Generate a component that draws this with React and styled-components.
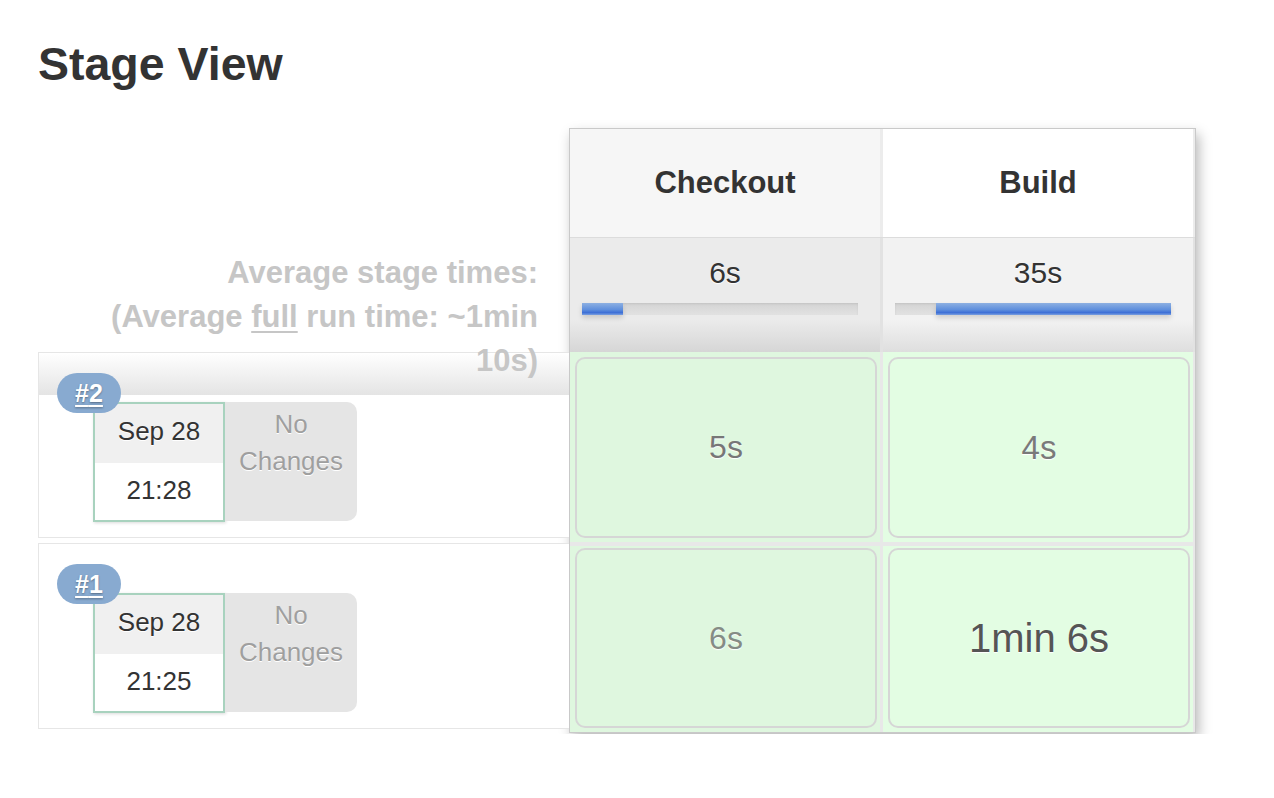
import React from 'react'
import styled, { createGlobalStyle } from 'styled-components'

const stages = ['Checkout', 'Build']

const averages = [
  { label: '6s', offset: 0, width: 15 },
  { label: '35s', offset: 15, width: 85 },
]

const builds = [
  {
    id: 2,
    date: 'Sep 28',
    time: '21:28',
    latest: true,
    cells: [
      { text: '5s', size: 32, color: '#777' },
      { text: '4s', size: 33, color: '#7a7a7a' },
    ],
  },
  {
    id: 1,
    date: 'Sep 28',
    time: '21:25',
    cells: [
      { text: '6s', size: 32, color: '#858c85' },
      { text: '1min 6s', size: 40, color: '#555' },
    ],
  },
]

const App = () => {
  return (
    <>
      <GlobalStyle />
      <Page>
        <Title>Stage View</Title>
        <Layout>
          <Side>
            <HeadSpacer />
            <AvgLabel>
              <div>Average stage times:</div>
              <div>
                (Average <u>full</u> run time: ~1min 10s)
              </div>
            </AvgLabel>
            {builds.map(b => (
              <BuildRow key={b.id} $latest={b.latest}>
                <Badge>
                  <u>#{b.id}</u>
                </Badge>
                <DateBox>
                  <div className="date">{b.date}</div>
                  <div className="time">{b.time}</div>
                </DateBox>
                <ChangesBox>
                  No
                  <br />
                  Changes
                </ChangesBox>
              </BuildRow>
            ))}
          </Side>
          <Table>
            <HeaderRow>
              {stages.map((s, i) => (
                <HeaderCell key={s} $alt={i % 2 === 1}>
                  {s}
                </HeaderCell>
              ))}
            </HeaderRow>
            <AvgRow>
              {averages.map((a, i) => (
                <AvgCell key={i} $alt={i % 2 === 1}>
                  <span className="value">{a.label}</span>
                  <Track>
                    <Fill $offset={a.offset} $width={a.width} />
                  </Track>
                </AvgCell>
              ))}
            </AvgRow>
            <Body>
              {builds.map(b =>
                b.cells.map((c, i) => (
                  <StageCell
                    key={`${b.id}-${i}`}
                    $alt={i % 2 === 1}
                    $first={b.latest}
                  >
                    <Duration $size={c.size} $color={c.color}>
                      {c.text}
                    </Duration>
                  </StageCell>
                ))
              )}
            </Body>
          </Table>
        </Layout>
      </Page>
    </>
  )
}

export default App

const GlobalStyle = createGlobalStyle`
 body {
   margin: 0;
   background: #fff;
   font-family: "Liberation Sans", Helvetica, Arial, sans-serif;
   color: #333;
 }
`
const Page = styled.div`
 padding: 38px 0 0 38px;
`
const Title = styled.h1`
 margin: 0;
 font-size: 46.5px;
 line-height: 52px;
 font-weight: 700;
 color: #333;
`
const Layout = styled.div`
 margin-top: 38px;
 display: flex;
 align-items: flex-start;
`
const Side = styled.div`
 width: 531px;
 display: flex;
 flex-direction: column;
`
const HeadSpacer = styled.div`
 height: 110px;
`
const AvgLabel = styled.div`
 position: relative;
 z-index: 2;
 height: 114px;
 box-sizing: border-box;
 padding: 13px 31px 0 0;
 width: 500px;
 margin-left: auto;
 text-align: right;
 font-size: 31px;
 line-height: 44px;
 font-weight: 700;
 color: #c6c6c6;
 u {
   text-decoration-thickness: 2px;
   text-underline-offset: 4px;
 }
`
const BuildRow = styled.div`
 position: relative;
 height: 186px;
 box-sizing: border-box;
 margin-bottom: 5px;
 border: 1px solid #e6e6e6;
 border-right: none;
 padding: 49px 0 0 54px;
 display: flex;
 align-items: flex-start;
 background: ${p =>
   p.$latest
     ? 'linear-gradient(to bottom, #fff 0, #e4e4e4 42px, #fff 42px)'
     : '#fff'};
`
const Badge = styled.div`
 position: absolute;
 z-index: 2;
 left: 18px;
 top: 20px;
 width: 64px;
 height: 40px;
 border-radius: 20px;
 background: #88aad0;
 color: #fff;
 font-size: 25px;
 font-weight: 700;
 display: flex;
 align-items: center;
 justify-content: center;
 text-shadow: 0 1px 2px rgba(0, 0, 0, 0.35);
 u {
   text-decoration-thickness: 2px;
   text-underline-offset: 3px;
 }
`
const DateBox = styled.div`
 width: 132px;
 height: 120px;
 box-sizing: border-box;
 border: 2px solid #a8d2be;
 background: #fff;
 box-shadow: 1px 1px 3px rgba(0, 0, 0, 0.15);
 display: flex;
 flex-direction: column;
 font-size: 26px;
 color: #333;
 .date,
 .time {
   flex: 1;
   display: flex;
   align-items: center;
   justify-content: center;
   text-shadow: 0 1px 0 #fff;
 }
 .date {
   background: #f0f0f0;
   padding-bottom: 3px;
 }
 .time {
   padding-bottom: 2px;
 }
`
const ChangesBox = styled.div`
 width: 132px;
 height: 119px;
 box-sizing: border-box;
 background: #e5e5e5;
 border-radius: 0 10px 10px 0;
 padding-top: 4px;
 text-align: center;
 font-size: 26px;
 line-height: 37px;
 color: #9f9f9f;
 text-shadow: 0 1px 0 #fff;
`
const Table = styled.div`
 width: 625px;
 border: 1px solid #c9c9c9;
 background: #e8e8e8;
 box-shadow: 3px 6px 12px rgba(0, 0, 0, 0.28);
 flex-shrink: 0;
`
const HeaderRow = styled.div`
 display: grid;
 grid-template-columns: 310px 310px;
 column-gap: 3px;
 background: #ececec;
 border-bottom: 1px solid #dcdcdc;
`
const HeaderCell = styled.div`
 height: 108px;
 display: flex;
 align-items: center;
 justify-content: center;
 background: ${p => (p.$alt ? '#fff' : '#f6f6f6')};
 font-size: 31px;
 font-weight: 700;
 color: #333;
`
const AvgRow = styled.div`
 display: grid;
 grid-template-columns: 310px 310px;
 column-gap: 3px;
 background: #e2e2e2;
`
const AvgCell = styled.div`
 height: 114px;
 box-sizing: border-box;
 padding: 17px 0 0 12px;
 background: ${p =>
   p.$alt
     ? 'linear-gradient(to bottom, #f2f2f2 0, #f2f2f2 72%, #dedede 100%)'
     : 'linear-gradient(to bottom, #ebebeb 0, #ebebeb 72%, #d6d6d6 100%)'};
 .value {
   display: block;
   width: 286px;
   text-align: center;
   font-size: 30px;
   line-height: 36px;
   color: #333;
   text-shadow: 0 1px 1px #fff;
 }
`
const Track = styled.div`
 margin-top: 12px;
 width: 276px;
 height: 12px;
 background: linear-gradient(to bottom, #d3d3d3, #e2e2e2);
 box-shadow: inset 0 1px 2px rgba(0, 0, 0, 0.08);
`
const Fill = styled.div`
 margin-left: ${p => p.$offset}%;
 width: ${p => p.$width}%;
 height: 12px;
 background: linear-gradient(to bottom, #8db0e2 0, #5f8fdd 55%, #3d6fd6 80%, #7aa0e0 100%);
 box-shadow: 0 3px 5px rgba(0, 0, 0, 0.15);
`
const Body = styled.div`
 display: grid;
 grid-template-columns: 310px 310px;
 grid-template-rows: 190px 186px;
 column-gap: 3px;
 row-gap: 4px;
 background: #e8e8e8;
`
const StageCell = styled.div`
 padding: ${p => (p.$first ? '5px 3px 4px 5px' : '2px 3px 4px 5px')};
 background: ${p => (p.$alt ? '#e3fde3' : '#dff7df')};
 display: flex;
`
const Duration = styled.div`
 flex: 1;
 border: 2px solid #d6d6d6;
 border-radius: 10px;
 display: flex;
 align-items: center;
 justify-content: center;
 font-size: ${p => p.$size}px;
 color: ${p => p.$color};
 text-shadow: 0 1px 1px #fff;
`
